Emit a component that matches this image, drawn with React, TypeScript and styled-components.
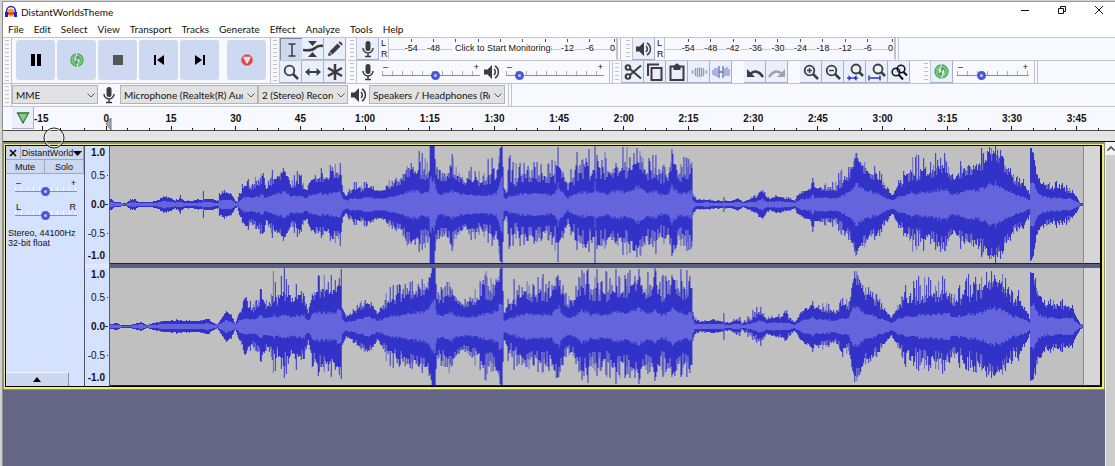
import React from "react";
import styled, { createGlobalStyle, css } from "styled-components";

const LINE = "#c3c4ca";
const BAR = "#f8f9fe";
const INK = "#3c3c3c";
const UI = `Lato, "Noto Sans", sans-serif`;
const ARIAL = `"Liberation Sans", Arial, sans-serif`;

const Global = createGlobalStyle`
  * { box-sizing: border-box; }
  body { margin: 0; background: #636684; font-family: ${UI}; color: #111; }
  button, select, input { font: inherit; color: inherit; margin: 0; }
  button { padding: 0; border: 0; background: none; }
  svg { display: block; flex: none; }
`;

/* ---------- window frame ---------- */
const Window = styled.div`
  min-height: 100vh;
  display: flex;
  flex-direction: column;
  position: relative;
  overflow: hidden;
  background: #636684;
  border-left: 2px solid #d2d2d2;
  border-top: 1px solid #d2d2d2;
`;
const Inner = styled.div`
  flex: 1;
  display: flex;
  flex-direction: column;
  border-left: 1px solid #8f8f8f;
  border-top: 1px solid #999;
`;
const TitleBar = styled.header`
  display: flex;
  align-items: center;
  height: 19px;
  background: #fff;
  padding-left: 1px;
`;
const Title = styled.h1`
  flex: 1;
  margin: 0 0 0 3px;
  font-size: 10px;
  line-height: 18px;
  font-weight: 400;
`;
const WinButtons = styled.div`
  display: flex;
  gap: 20px;
  padding: 0 8px 3px 0;
`;
const WinButton = styled.button`
  width: 17px;
  height: 16px;
  display: grid;
  place-items: center;
`;
const Menu = styled.nav`
  display: flex;
  gap: 10px;
  height: 16px;
  padding-left: 5px;
  background: #fff;
`;
const MenuItem = styled.button`
  font-size: 10px;
  line-height: 16px;
`;

/* ---------- toolbar dock ---------- */
const Dock = styled.div`
  background: ${BAR};
  border-top: 1px solid ${LINE};
`;
const DockRow = styled.div`
  display: flex;
  border-bottom: 1px solid ${LINE};
`;
const Stack = styled.div<{ $grow?: boolean }>`
  display: flex;
  flex-direction: column;
  ${(p) => (p.$grow ? "flex: 1; min-width: 0;" : "padding-right: 2px;")}
`;
const Strip = styled.div<{ $line?: boolean }>`
  display: flex;
  height: ${(p) => (p.$line ? 23 : 22)}px;
  ${(p) => p.$line && `border-bottom: 1px solid ${LINE};`}
`;
const Grabber = styled.span`
  width: 9px;
  flex: none;
  border-right: 1px solid ${LINE};
  padding: 2px;
  background: repeating-linear-gradient(#c0c1c8 0 1px, transparent 1px 4px) content-box;
`;
const EndCap = styled.span`
  width: 4px;
  flex: none;
  border-left: 1px solid ${LINE};
  border-right: 1px solid ${LINE};
`;
const Space = styled.span<{ $w: number }>`
  width: ${(p) => p.$w}px;
  flex: none;
`;
const Transport = styled.div`
  display: flex;
  gap: 2px;
  padding: 2px 4px 3px 4px;
  border-right: 1px solid ${LINE};
`;
const BigButton = styled.button<{ $apart?: boolean }>`
  width: 39px;
  height: 40px;
  border-radius: 3px;
  background: #cdd9f0;
  display: grid;
  place-items: center;
  ${(p) => p.$apart && "margin-left: 6px;"}
`;
const ToolButton = styled.button<{ $down?: boolean }>`
  width: 22px;
  height: 22px;
  flex: none;
  display: grid;
  place-items: center;
  background: #e9effc;
  border: solid;
  border-width: 0 1px 1px 0;
  border-color: #a9afbe;
  ${(p) =>
    p.$down &&
    css`
      background: #cdd9f0;
      border-width: 1px 0 0 1px;
      border-color: #7f8799;
    `}
`;
const Glyph = styled.span<{ $w: number }>`
  width: ${(p) => p.$w}px;
  flex: none;
  display: grid;
  place-items: center;
`;

/* ---------- meters ---------- */
const Channels = styled.div`
  width: 9px;
  padding-left: 2px;
  font: 9px/11px ${ARIAL};
`;
const MeterFace = styled.button<{ $w: number; $lead: number }>`
  position: relative;
  width: ${(p) => p.$w}px;
  height: 21px;
  display: grid;
  grid-template-columns: repeat(9, minmax(0, 1fr)) 14px;
  padding: 0 1px 0 ${(p) => p.$lead}px;
  border-left: 1px solid ${LINE};
  border-right: 1px solid ${LINE};
  background: linear-gradient(#c9cad0, #c9cad0) 0 11px / 100% 1px no-repeat;
  font: 9px/11px ${ARIAL};
`;
const Mark = styled.span`
  display: flex;
  flex-direction: column;
  align-items: center;
  &:nth-child(10) {
    align-items: flex-end;
  }
  &::before {
    content: "";
    width: 1px;
    height: 3px;
    margin: 1px 0 2px;
    background: #555;
  }
`;
const MarkText = styled.span`
  background: ${BAR};
  line-height: 9px;
`;
const Hint = styled.span`
  position: absolute;
  left: 63px;
  top: 5px;
  padding-left: 3px;
  background: #fff;
`;

/* ---------- sliders ---------- */
const SliderBox = styled.label<{ $w: number; $tall?: boolean }>`
  width: ${(p) => p.$w}px;
  flex: none;
  display: flex;
  flex-direction: column;
  padding-top: ${(p) => (p.$tall ? 0 : 2)}px;
`;
const Ends = styled.span`
  display: flex;
  justify-content: space-between;
  padding: 0 1px;
  height: 6px;
  font: 9px/9px ${ARIAL};
`;
const Range = styled.input<{ $soft?: boolean }>`
  appearance: none;
  width: 100%;
  height: 11px;
  background:
    linear-gradient(#8d8f96, #8d8f96) 0 6px / 100% 1px no-repeat,
    repeating-linear-gradient(90deg, ${(p) => (p.$soft ? "#f8faff 0 1px, transparent 1px 6px" : "#aaacb3 0 1px, transparent 1px 10px")}) 0 2px / 100% 4px no-repeat;
  &::-webkit-slider-thumb {
    appearance: none;
    width: 9px;
    height: 9px;
    margin-top: 1px;
    border-radius: 50%;
    border: 3px solid #4a55dc;
    background: #c3c8f5;
  }
`;

/* ---------- device toolbar ---------- */
const SelectWrap = styled.label<{ $w: number }>`
  position: relative;
  display: flex;
  width: ${(p) => p.$w}px;
  height: 19px;
  margin-top: 1px;
  svg {
    position: absolute;
    right: 3px;
    top: 8px;
    pointer-events: none;
  }
`;
const Select = styled.select`
  appearance: none;
  width: 100%;
  height: 19px;
  padding: 0 14px 0 3px;
  border: 1px solid #b3b3b3;
  border-radius: 0;
  background: #e2e2e2;
  font-size: 10px;
  text-overflow: clip;
`;

/* ---------- timeline ---------- */
const Timeline = styled.div`
  display: flex;
  height: 24px;
  padding: 0 6px 0 9px;
  background: ${BAR};
  border-bottom: 1px solid #4c4c4c;
`;
const PinButton = styled.button`
  width: 22px;
  height: 22px;
  flex: none;
  display: grid;
  place-items: center;
  background: #e9effc;
  border: solid #a9afbe;
  border-width: 0 1px 1px 0;
`;
const FirstMark = styled.div`
  width: 40px;
  flex: none;
  display: flex;
  flex-direction: column;
  justify-content: space-between;
  font: bold 10px/11px ${ARIAL};
  padding: 6px 5px 0 0;
`;
const TimeGrid = styled.div`
  flex: 1;
  display: grid;
  grid-template-columns: repeat(16, minmax(0, 1fr));
`;
const TimeCell = styled.div`
  display: flex;
  flex-direction: column;
  justify-content: space-between;
  padding-top: 6px;
  text-align: center;
  font: bold 10px/11px ${ARIAL};
`;
const Ticks = styled.div`
  display: flex;
  justify-content: space-around;
  align-items: flex-end;
`;
const Tick = styled.i<{ $major?: boolean }>`
  width: 1px;
  height: ${(p) => (p.$major ? 4 : 2)}px;
  background: #222;
`;
const QuickPlay = styled.div`
  height: 11px;
  background: #e4e4e4;
  border-bottom: 1px solid #111;
`;
const PlayMark = styled.svg`
  position: absolute;
  left: 104px;
  top: 117px;
`;
const Pointer = styled.svg`
  position: absolute;
  left: 41px;
  top: 126px;
`;

/* ---------- tracks ---------- */
const Workspace = styled.main`
  flex: 1;
  display: flex;
`;
const TrackArea = styled.div`
  flex: 1;
  min-width: 0;
`;
const Track = styled.section`
  display: flex;
  border: solid #8f8f78;
  border-width: 2px 1px 1px 0;
  background: #000;
  box-shadow: inset 1px 0 0 #8f8f78;
`;
const Glow = styled.div`
  flex: 1;
  min-width: 0;
  display: flex;
  margin-left: 1px;
  border: solid #f0ee78;
  border-width: 1px 2px 2px 1px;
`;
const Body = styled.div`
  flex: 1;
  min-width: 0;
  display: flex;
  border: solid #000;
  border-width: 1px 2px 1px 1px;
`;
const Panel = styled.div`
  width: 79px;
  flex: none;
  display: flex;
  flex-direction: column;
  background: #d4e1ff;
  border-right: 1px solid #4d5266;
  font: 9px/10px ${ARIAL};
`;
const PanelRow = styled.div`
  display: flex;
`;
const PanelButton = styled.button<{ $w?: number }>`
  ${(p) => (p.$w ? `width: ${p.$w}px;` : "flex: 1;")}
  height: 14px;
  display: flex;
  align-items: center;
  justify-content: center;
  background: #ccd8f0;
  border: solid #a2a8b8;
  border-width: 0 1px 1px 0;
  white-space: nowrap;
`;
const PanelSliders = styled.div`
  display: flex;
  flex-direction: column;
  gap: 7px;
  padding: 5px 6px 0 9px;
`;
const Info = styled.p`
  margin: 8px 0 0 2px;
  flex: 1;
`;
const Collapse = styled.button`
  width: 63px;
  height: 14px;
  display: grid;
  place-items: center;
  background: #ccd8f0;
  border: solid;
  border-width: 1px 1px 0 0;
  border-color: #f4f7ff #8a90a0 #8a90a0;
`;
const ChannelStack = styled.div`
  flex: 1;
  min-width: 0;
  display: flex;
  flex-direction: column;
`;
const ChannelRow = styled.div`
  display: flex;
  height: 118px;
`;
const Divider = styled.div`
  height: 4px;
  display: flex;
  background: #5c6080;
  &::before {
    content: "";
    width: 24px;
    background: #e2eaff;
  }
`;
const VRuler = styled.div`
  width: 25px;
  flex: none;
  display: grid;
  grid-template-rows: 13px 32px 26px 32px 13px;
  background: #d4e1ff;
  border-right: 1px solid #55596a;
  font: 10px/11px ${ARIAL};
`;
const VMark = styled.span<{ $bold?: boolean; $tick?: boolean }>`
  display: flex;
  align-items: center;
  justify-content: flex-end;
  padding-right: 1px;
  font-weight: ${(p) => (p.$bold ? 700 : 400)};
  &::after {
    content: "";
    width: ${(p) => (p.$bold ? 3 : 1)}px;
    height: 1px;
    margin-left: ${(p) => (p.$bold ? 0 : 2)}px;
    background: ${(p) => (p.$tick ? "#222" : "transparent")};
  }
`;
const Clip = styled.div`
  flex: 1;
  min-width: 0;
  background: #c0c0c0;
  border-bottom: 1px solid #222;
  svg {
    width: 100%;
    height: 117px;
  }
`;
const Tail = styled.div`
  width: 17px;
  flex: none;
  background: #d6d6d6;
  border-left: 1px solid #8a8a8a;
  border-bottom: 1px solid #222;
`;
const ScrollBar = styled.div`
  width: 10px;
  flex: none;
  background: #cdcdcd;
  border-left: 1px solid #eee;
`;
const ScrollButton = styled.button`
  width: 9px;
  height: 13px;
  display: grid;
  place-items: center;
  overflow: hidden;
  background: #f3f3f3;
`;

/* ---------- waveform data: [pixel column, body height, peak height] ---------- */
type Point = [number, number, number];
const LEFT: Point[] = [
  [1, 5, 5], [4, 2, 2], [16, 1, 1], [20, 4, 5], [25, 4, 5], [28, 2, 2], [41, 2, 2], [49, 4, 5], [53, 7, 9], [61, 5, 6],
  [65, 3, 4], [70, 5, 9], [74, 3, 3], [86, 3, 5], [92, 4, 5], [93, 13, 13], [94, 5, 6], [98, 5, 6], [106, 3, 4],
  [108, 3, 3], [109, 9, 12], [113, 10, 14], [121, 9, 11], [125, 3, 3], [127, 2, 3], [129, 7, 12], [134, 17, 26],
  [141, 16, 24], [149, 20, 30], [152, 24, 44], [156, 15, 17], [163, 22, 40], [167, 25, 36], [175, 30, 36], [181, 17, 24],
  [188, 20, 34], [197, 13, 15], [200, 22, 32], [209, 25, 35], [219, 24, 36], [224, 29, 44], [230, 28, 40], [233, 12, 12],
  [236, 8, 9], [243, 14, 24], [249, 13, 20], [258, 16, 22], [266, 12, 16], [276, 14, 18], [281, 18, 27], [288, 20, 25],
  [293, 24, 34], [296, 30, 46], [302, 31, 50], [306, 29, 52], [316, 27, 48], [319, 30, 48], [320, 58, 58], [324, 58, 58],
  [326, 32, 40], [328, 25, 34], [336, 25, 34], [341, 32, 54], [347, 26, 34], [356, 20, 27], [361, 20, 38], [371, 20, 32],
  [378, 22, 50], [386, 24, 38], [388, 34, 44], [390, 56, 58], [392, 58, 58], [394, 16, 18], [396, 10, 12], [399, 20, 46],
  [406, 20, 44], [411, 24, 44], [424, 25, 42], [436, 23, 38], [445, 23, 48], [447, 36, 44], [448, 57, 58], [449, 36, 40],
  [454, 24, 32], [458, 14, 17], [461, 18, 34], [468, 26, 52], [471, 28, 58], [481, 26, 52], [484, 28, 50], [485, 57, 58],
  [486, 28, 50], [491, 28, 58], [498, 25, 48], [506, 32, 58], [511, 30, 58], [516, 28, 56], [523, 32, 54], [527, 42, 56],
  [531, 38, 56], [537, 26, 46], [546, 30, 56], [551, 22, 38], [559, 26, 42], [562, 42, 58], [566, 32, 54], [571, 24, 48],
  [577, 28, 58], [581, 29, 50], [582, 40, 46], [583, 10, 12], [585, 4, 8], [588, 3, 5], [596, 4, 5], [603, 3, 5],
  [613, 3, 3], [614, 7, 7], [615, 3, 4], [621, 3, 4], [629, 5, 6], [633, 2, 3], [639, 4, 6], [646, 6, 9], [653, 12, 17],
  [657, 6, 8], [661, 5, 6], [666, 7, 9], [676, 5, 8], [685, 3, 4], [688, 7, 12], [694, 12, 15], [701, 14, 16],
  [703, 26, 28], [705, 15, 17], [716, 14, 22], [726, 14, 26], [733, 20, 36], [739, 26, 36], [743, 36, 45], [746, 50, 57],
  [751, 37, 45], [761, 29, 38], [769, 23, 36], [776, 15, 20], [781, 10, 12], [783, 8, 9], [788, 17, 21], [794, 20, 34],
  [802, 27, 54], [809, 25, 46], [813, 30, 48], [819, 26, 38], [829, 34, 56], [836, 34, 50], [844, 23, 27], [851, 28, 46],
  [857, 32, 52], [866, 32, 52], [876, 41, 56], [881, 48, 57], [887, 48, 58], [895, 36, 48], [901, 29, 38], [905, 22, 28],
  [913, 18, 26], [919, 11, 18], [920, 9, 10], [921, 54, 56], [924, 50, 55], [927, 30, 35], [931, 20, 24], [941, 15, 22],
  [951, 14, 24], [961, 12, 19], [968, 5, 6], [971, 1, 1], [975, 0, 0],
];
const RIGHT: Point[] = [
  [1, 2, 2], [6, 3, 3], [11, 1, 1], [20, 1, 1], [31, 4, 4], [36, 1, 1], [46, 3, 4], [56, 5, 6], [71, 5, 7], [81, 5, 6],
  [91, 5, 6], [97, 7, 9], [103, 3, 3], [107, 1, 1], [113, 10, 11], [116, 14, 16], [121, 10, 12], [125, 2, 2], [129, 13, 15],
  [134, 17, 29], [143, 15, 24], [151, 25, 44], [157, 18, 22], [163, 25, 54], [167, 22, 36], [173, 28, 58], [177, 28, 58],
  [181, 20, 32], [187, 25, 46], [194, 26, 40], [198, 12, 14], [202, 28, 56], [211, 32, 50], [219, 32, 48], [224, 30, 52],
  [229, 38, 58], [231, 40, 58], [232, 18, 20], [236, 9, 10], [241, 11, 14], [251, 18, 26], [257, 22, 30], [263, 19, 22],
  [267, 12, 14], [270, 14, 18], [276, 20, 36], [286, 25, 42], [301, 30, 44], [316, 35, 47], [320, 46, 52], [322, 58, 58],
  [325, 58, 58], [327, 26, 34], [336, 26, 44], [340, 34, 56], [346, 26, 32], [354, 20, 26], [361, 22, 38], [371, 26, 46],
  [375, 30, 58], [381, 28, 48], [388, 40, 58], [390, 57, 58], [392, 58, 58], [394, 12, 14], [398, 16, 48], [406, 22, 46],
  [411, 24, 42], [417, 30, 50], [424, 25, 42], [432, 28, 52], [441, 26, 46], [447, 44, 58], [449, 44, 56], [453, 25, 42],
  [458, 20, 28], [466, 24, 46], [471, 36, 58], [476, 34, 58], [481, 28, 58], [488, 28, 58], [496, 26, 54], [503, 32, 58],
  [509, 32, 58], [516, 30, 58], [523, 36, 58], [529, 42, 58], [536, 30, 56], [546, 36, 58], [551, 26, 50], [559, 30, 56],
  [562, 44, 58], [566, 36, 58], [574, 28, 58], [582, 36, 57], [583, 14, 15], [585, 6, 8], [591, 4, 5], [603, 5, 7],
  [613, 4, 5], [614, 13, 13], [615, 3, 4], [621, 3, 4], [629, 6, 12], [632, 2, 3], [640, 5, 13], [651, 13, 22], [657, 6, 8],
  [666, 8, 12], [679, 7, 16], [685, 3, 4], [691, 12, 14], [701, 17, 22], [703, 24, 27], [705, 15, 18], [716, 15, 24],
  [726, 13, 20], [733, 19, 36], [739, 18, 28], [744, 46, 54], [749, 46, 54], [754, 30, 42], [761, 28, 38], [768, 20, 30],
  [776, 14, 17], [782, 8, 9], [788, 17, 23], [794, 22, 42], [803, 23, 44], [811, 25, 50], [819, 27, 52], [828, 26, 42],
  [836, 32, 56], [843, 23, 29], [847, 21, 34], [856, 27, 52], [866, 27, 52], [876, 34, 56], [882, 43, 58], [889, 43, 58],
  [896, 34, 48], [903, 23, 35], [911, 21, 34], [919, 10, 12], [920, 6, 7], [921, 54, 55], [924, 50, 54], [929, 28, 38],
  [936, 20, 27], [946, 19, 28], [956, 18, 25], [963, 18, 22], [966, 10, 11], [971, 2, 2], [975, 0, 0],
];

const WIDTH = 974;
const MID = 58;

const noise = (n: number) => {
  const v = Math.sin(n * 127.1 + 311.7) * 43758.5453;
  return v - Math.floor(v);
};

function envelope(points: Point[], x: number): [number, number] {
  let i = 0;
  while (i < points.length - 2 && points[i + 1][0] <= x) i++;
  const [ax, ab, ap] = points[i];
  const [bx, bb, bp] = points[i + 1];
  const t = Math.min(1, Math.max(0, (x - ax) / (bx - ax)));
  return [ab + (bb - ab) * t, ap + (bp - ap) * t];
}

function buildPaths(points: Point[], seed: number) {
  let body = "";
  let pale = "";
  let rms = "";
  const column = (x: number, up: number, down: number) => `M${x} ${MID - up}h1V${MID + 1 + down}h-1z`;
  for (let x = 0; x < WIDTH; x++) {
    const [base, peak] = envelope(points, x);
    const reach = (k: number) => {
      const r = noise(x * 3 + seed + k);
      const spike = r > 0.6 ? 0.4 + (r - 0.6) * 1.8 : r * 0.6;
      return Math.max(0, Math.min(58, Math.round(base + (peak - base) * spike)));
    };
    const up = reach(0);
    const down = Math.round((reach(0) * 2 + reach(5000)) / 3);
    const light = noise(x * 7 + seed + 90);
    if (light > 0.74 && peak - base > 5) {
      pale += column(x, up, down);
      body += column(x, Math.round(base * 0.9), Math.round(base * 0.9));
    } else {
      body += column(x, up, down);
    }
    const inner = Math.round(base * (0.36 + noise(x + seed) * 0.12));
    rms += column(x, inner, inner);
  }
  return { body, pale, rms };
}

function Waveform({ points, seed }: { points: Point[]; seed: number }) {
  const { body, pale, rms } = React.useMemo(() => buildPaths(points, seed), [points, seed]);
  return (
    <svg viewBox={`0 0 ${WIDTH} 117`} preserveAspectRatio="none" aria-hidden="true">
      <path d={pale} fill="#6c6cc8" />
      <path d={body} fill="#3232c8" />
      <path d={rms} fill="#6464dc" />
    </svg>
  );
}

/* ---------- icons ---------- */
const Svg = ({ s = 18, h, children }: { s?: number; h?: number; children: React.ReactNode }) => (
  <svg width={s} height={h ?? s} viewBox={`0 0 ${s} ${h ?? s}`} fill="none" stroke={INK} strokeWidth="2" aria-hidden="true">
    {children}
  </svg>
);
const Logo = () => (
  <Svg s={14} h={13}>
    <path d="M3.5 7a3.5 3.5 0 0 1 7 0l-1.500 4.500h-4z" fill="#f6a020" stroke="none" />
    <path d="M3.500 7.500h7v2h-7z" fill="#e2311d" stroke="none" />
    <path d="M2.500 8V6.500a4.500 5 0 0 1 9 0V8" stroke="#1b22c9" strokeWidth="1.500" />
    <path d="M2.500 7v5M11.500 7v5" stroke="#1b22c9" strokeWidth="3" />
  </Svg>
);
const Loop = ({ s = 14 }: { s?: number }) => (
  <svg width={s} height={s} viewBox="0 0 14 14" fill="none" aria-hidden="true">
    <circle cx="7" cy="7" r="4.700" stroke="#43a04c" strokeWidth="4" />
    <circle cx="7" cy="7" r="4.700" stroke="#7ccb80" strokeWidth="2" />
    <path d="M6 3l3.500 1.500L7 7.500zM8 11l-3.500-1.500L7 6.500z" fill="#43a04c" />
    <path d="M6.500 0v3.500L4 5.500M7.500 14v-3.500L10 8.500" stroke="#dbe6f5" strokeWidth="1" />
  </svg>
);
const Mic = () => (
  <Svg s={14} h={18}>
    <rect x="4.500" y="1" width="5" height="10" rx="2.500" fill={INK} stroke="none" />
    <path d="M2 8a5 5 0 0 0 10 0M7 13v3M4 16.500h6" strokeWidth="1.500" />
  </Svg>
);
const Speaker = () => (
  <Svg s={16} h={16}>
    <path d="M0 5.500h3.500L8 1v14l-4.500-4.500H0z" fill={INK} stroke="none" />
    <path d="M10 5a4 4 0 0 1 0 6M11 2a7 7 0 0 1 0 12" strokeWidth="1.500" />
  </Svg>
);
const Lens = ({ children }: { children?: React.ReactNode }) => (
  <Svg>
    <circle cx="7.500" cy="7.500" r="4.800" strokeWidth="1.800" />
    <path d="M11 11l5 5" strokeWidth="2.500" />
    {children}
  </Svg>
);
const Chevron = () => (
  <svg width="8" height="5" viewBox="0 0 8 5" fill="none" stroke="#555" aria-hidden="true">
    <path d="M.5.500L4 4 7.500.500" />
  </svg>
);

function Slider(props: { label: string; w: number; value: number; ends?: [string, string]; soft?: boolean }) {
  const [a, b] = props.ends ?? ["–", "+"];
  return (
    <SliderBox $w={props.w} $tall={props.soft}>
      <Ends>
        <span>{a}</span>
        <span>{b}</span>
      </Ends>
      <Range type="range" aria-label={props.label} defaultValue={props.value} $soft={props.soft} />
    </SliderBox>
  );
}

function Picker({ label, w, value }: { label: string; w: number; value: string }) {
  return (
    <SelectWrap $w={w}>
      <Select aria-label={label} defaultValue={value}>
        <option>{value}</option>
      </Select>
      <Chevron />
    </SelectWrap>
  );
}

const DB = ["-54", "-48", "-42", "-36", "-30", "-24", "-18", "-12", "-6", "0"];
const COVERED = ["-42", "-36", "-30", "-24"];
function Meter({ w, lead, hint, label }: { w: number; lead: number; hint?: string; label: string }) {
  return (
    <>
      <Channels>
        L<br />R
      </Channels>
      <MeterFace $w={w} $lead={lead} aria-label={label}>
        {DB.map((d) => (
          <Mark key={d}>{!(hint && COVERED.includes(d)) && <MarkText>{d}</MarkText>}</Mark>
        ))}
        {hint && <Hint>{hint}</Hint>}
      </MeterFace>
      <EndCap />
    </>
  );
}

const MENUS = ["File", "Edit", "Select", "View", "Transport", "Tracks", "Generate", "Effect", "Analyze", "Tools", "Help"];
const TIMES = ["0", "15", "30", "45", "1:00", "1:15", "1:30", "1:45", "2:00", "2:15", "2:30", "2:45", "3:00", "3:15", "3:30", "3:45"];

function Channel({ points, seed }: { points: Point[]; seed: number }) {
  return (
    <ChannelRow>
      <VRuler>
        <VMark $bold>1.0</VMark>
        <VMark $tick>0.5</VMark>
        <VMark $bold $tick>0.0</VMark>
        <VMark $tick>-0.5</VMark>
        <VMark $bold>-1.0</VMark>
      </VRuler>
      <Clip>
        <Waveform points={points} seed={seed} />
      </Clip>
      <Tail />
    </ChannelRow>
  );
}

export default function App() {
  return (
    <Window>
      <Global />
      <Inner>
        <TitleBar>
          <Logo />
          <Title>DistantWorldsTheme</Title>
          <WinButtons>
            <WinButton aria-label="Minimize">
              <Svg s={10}><path d="M1 5.500h8" stroke="#111" strokeWidth="1" /></Svg>
            </WinButton>
            <WinButton aria-label="Restore">
              <Svg s={10}><path d="M1.500 3.500h5v5h-5zM3.500 3V1.500h5v5H7" stroke="#111" strokeWidth="1" /></Svg>
            </WinButton>
            <WinButton aria-label="Close">
              <Svg s={10}><path d="M1 1l8 8M9 1l-8 8" stroke="#111" strokeWidth="1" /></Svg>
            </WinButton>
          </WinButtons>
        </TitleBar>
        <Menu>
          {MENUS.map((m) => (
            <MenuItem key={m}>{m}</MenuItem>
          ))}
        </Menu>

        <Dock>
          <DockRow>
            <Grabber />
            <Transport>
              <BigButton aria-label="Pause">
                <Svg s={12}><path d="M1 0h4v12H1zM7 0h4v12H7z" fill="#000" stroke="none" /></Svg>
              </BigButton>
              <BigButton aria-label="Play loop"><Loop /></BigButton>
              <BigButton aria-label="Stop">
                <Svg s={10}><path d="M0 0h10v10H0z" fill="#555" stroke="none" /></Svg>
              </BigButton>
              <BigButton aria-label="Skip to start">
                <Svg s={12}><path d="M1 1h2v10H1zM11 1v10L4 6z" fill="#000" stroke="none" /></Svg>
              </BigButton>
              <BigButton aria-label="Skip to end">
                <Svg s={12}><path d="M9 1h2v10H9zM1 1v10l7-5z" fill="#000" stroke="none" /></Svg>
              </BigButton>
              <BigButton aria-label="Record" $apart>
                <Svg s={12}>
                  <circle cx="6" cy="6" r="5.800" fill="#e04848" stroke="none" />
                  <path d="M3 3.500h6L6 9z" fill="#e6e2f0" stroke="#e6e2f0" strokeWidth="1.500" strokeLinejoin="round" />
                </Svg>
              </BigButton>
            </Transport>

            <Grabber />
            <Stack>
              <Strip $line>
                <ToolButton $down aria-label="Selection tool">
                  <Svg s={16}><path d="M4.500 2h2.500l1 .7 1-.7h2.500M4.500 14h2.500l1-.7 1 .7h2.500M8 2.500v11" strokeWidth="1.500" /></Svg>
                </ToolButton>
                <ToolButton aria-label="Envelope tool">
                  <Svg s={20}>
                    <path d="M0 11q9 1 12-2t8-2" strokeWidth="2.500" />
                    <path d="M5 2h9L9.500 7zM5 18h9l-4.500-5z" fill={INK} stroke="none" />
                  </Svg>
                </ToolButton>
                <ToolButton aria-label="Draw tool">
                  <Svg s={16}><path d="M1 15l1-4 3 3zM2.500 10.500l8-8 3 3-8 8zM11.500 1.500l1-1q1 0 2 1t1 2l-1 1z" fill={INK} stroke="none" /></Svg>
                </ToolButton>
              </Strip>
              <Strip>
                <ToolButton aria-label="Zoom tool"><Lens /></ToolButton>
                <ToolButton aria-label="Time shift tool">
                  <Svg><path d="M3 9h12" /><path d="M5.500 5L1 9l4.500 4zM12.500 5L17 9l-4.500 4z" fill={INK} stroke="none" /></Svg>
                </ToolButton>
                <ToolButton aria-label="Multi tool">
                  <Svg><path d="M9 1v16M2 5l14 8M2 13l14-8" strokeWidth="2.500" /></Svg>
                </ToolButton>
              </Strip>
            </Stack>

            <Stack $grow>
              <Strip $line>
                <Grabber />
                <ToolButton aria-label="Record meter"><Mic /></ToolButton>
                <Meter w={229} lead={11} hint="Click to Start Monitoring" label="Recording level" />
                <Space $w={3} />
                <Grabber />
                <ToolButton aria-label="Playback meter"><Speaker /></ToolButton>
                <Meter w={231} lead={12} label="Playback level" />
              </Strip>
              <Strip>
                <Grabber />
                <Glyph $w={22}><Mic /></Glyph>
                <Space $w={3} />
                <Slider label="Recording volume" w={98} value={55} />
                <Space $w={3} />
                <Glyph $w={18}><Speaker /></Glyph>
                <Space $w={5} />
                <Slider label="Playback volume" w={98} value={10} />
                <Space $w={5} />
                <EndCap />
                <Grabber />
                <ToolButton aria-label="Cut">
                  <Svg>
                    <circle cx="4" cy="4.500" r="2.300" />
                    <circle cx="4" cy="13.500" r="2.300" />
                    <path d="M6 6l11 9.500M6 12L17 2.500" />
                  </Svg>
                </ToolButton>
                <ToolButton aria-label="Copy">
                  <Svg><path d="M2 13V1.500h11M5.500 5h10v12h-10z" /></Svg>
                </ToolButton>
                <ToolButton aria-label="Paste">
                  <Svg><path d="M2.500 3.500h13V17h-13z" /><path d="M5.500 2.500H7a2 2 0 0 1 4 0h1.500V7h-7z" fill={INK} stroke="none" /></Svg>
                </ToolButton>
                <ToolButton aria-label="Trim">
                  <Svg>
                    <path d="M5.500 5v8M7.500 5v9M9.500 4v10M11.500 5v9M13.500 5v8" stroke="#9a9da6" strokeWidth="1.300" />
                    <path d="M1 9h3M15 9h3M3 7v4M16 7v4" stroke="#aab2e0" strokeWidth="1.300" />
                  </Svg>
                </ToolButton>
                <ToolButton aria-label="Silence">
                  <Svg>
                    <path d="M1 7v5M3 5v8M5 5v9M13 5v8M15 4v9M17 6v7" stroke="#8e96e4" strokeWidth="1.400" />
                    <path d="M7 3v12M11 3v12M7 9h4" stroke="#6a6f8a" strokeWidth="1.300" />
                  </Svg>
                </ToolButton>
                <Space $w={12} />
                <ToolButton aria-label="Undo">
                  <Svg><path d="M4 11q7-6 13 3" strokeWidth="2.500" /><path d="M1 6v8h8z" fill={INK} stroke="none" /></Svg>
                </ToolButton>
                <ToolButton aria-label="Redo">
                  <Svg><path d="M14 11Q7 5 1 14" stroke="#a0a2a8" strokeWidth="2.500" /><path d="M17 6v8H9z" fill="#a0a2a8" stroke="none" /></Svg>
                </ToolButton>
                <Space $w={12} />
                <ToolButton aria-label="Zoom in"><Lens><path d="M5 7.500h5M7.500 5v5" strokeWidth="1.400" /></Lens></ToolButton>
                <ToolButton aria-label="Zoom out"><Lens><path d="M5 7.500h5" strokeWidth="1.400" /></Lens></ToolButton>
                <ToolButton aria-label="Fit selection">
                  <Svg>
                    <circle cx="10" cy="6" r="4.500" strokeWidth="1.800" /><path d="M13 9l4 4" strokeWidth="2.500" />
                    <path d="M1 15h11" stroke="#2a32cc" strokeWidth="1.300" />
                    <path d="M2.500 12l3 3-3 3zM10.500 12l-3 3 3 3z" fill="#2a32cc" stroke="none" />
                  </Svg>
                </ToolButton>
                <ToolButton aria-label="Fit project">
                  <Svg>
                    <circle cx="10" cy="6" r="4.500" strokeWidth="1.800" /><path d="M13 9l4 4" strokeWidth="2.500" />
                    <path d="M1 12.500v5M12 12.500v5M2 15h10" stroke="#2a32cc" strokeWidth="1.500" />
                  </Svg>
                </ToolButton>
                <ToolButton aria-label="Toggle zoom">
                  <Svg>
                    <circle cx="11" cy="6" r="3.800" stroke="#111" strokeWidth="1.500" />
                    <circle cx="6" cy="9" r="3.800" stroke="#111" strokeWidth="1.500" />
                    <path d="M13 8.500l4 4M8.500 11.500l4.500 5" stroke="#111" strokeWidth="2" />
                  </Svg>
                </ToolButton>
                <Space $w={12} />
                <Grabber />
                <ToolButton aria-label="Play at speed"><Loop s={15} /></ToolButton>
                <Space $w={4} />
                <Slider label="Playback speed" w={72} value={31} />
                <Space $w={5} />
                <EndCap />
              </Strip>
            </Stack>
          </DockRow>

          <DockRow>
            <Grabber />
            <Strip>
              <Picker label="Audio host" w={86} value="MME" />
              <Glyph $w={22}><Mic /></Glyph>
              <Picker label="Recording device" w={138} value="Microphone (Realtek(R) Audio)" />
              <Picker label="Recording channels" w={90} value="2 (Stereo) Recording Channels" />
              <Glyph $w={21}><Speaker /></Glyph>
              <Picker label="Playback device" w={136} value="Speakers / Headphones (Realtek(R) Audio)" />
              <Space $w={3} />
              <EndCap />
            </Strip>
          </DockRow>
        </Dock>

        <Timeline>
          <PinButton aria-label="Pinned play head">
            <Svg s={14} h={14}><path d="M1.500 2h11L7 12z" fill="#7fd67f" stroke="#3d6b45" strokeWidth="1.300" /></Svg>
          </PinButton>
          <FirstMark>
            <span>-15</span>
            <Ticks><Tick $major /><Tick /></Ticks>
          </FirstMark>
          <TimeGrid>
            {TIMES.map((t) => (
              <TimeCell key={t}>
                <span>{t}</span>
                <Ticks><Tick /><Tick $major /><Tick /></Ticks>
              </TimeCell>
            ))}
          </TimeGrid>
        </Timeline>
        <QuickPlay />

        <Workspace>
          <TrackArea>
            <Track>
              <Glow>
                <Body>
                  <Panel>
                    <PanelRow>
                      <PanelButton $w={15} aria-label="Close track">
                        <Svg s={8}><path d="M1 1l6 6M7 1L1 7" stroke="#000" strokeWidth="1.500" /></Svg>
                      </PanelButton>
                      <PanelButton>
                        DistantWorld
                        <Svg s={9} h={6}><path d="M0 1h9L4.500 6z" fill="#000" stroke="none" /></Svg>
                      </PanelButton>
                    </PanelRow>
                    <PanelRow>
                      <PanelButton>Mute</PanelButton>
                      <PanelButton>Solo</PanelButton>
                    </PanelRow>
                    <PanelSliders>
                      <Slider label="Gain" w={62} value={49} soft />
                      <Slider label="Pan" w={62} value={49} ends={["L", "R"]} soft />
                    </PanelSliders>
                    <Info>
                      Stereo, 44100Hz
                      <br />
                      32-bit float
                    </Info>
                    <Collapse aria-label="Collapse track">
                      <Svg s={8} h={5}><path d="M0 5h8L4 0z" fill="#000" stroke="none" /></Svg>
                    </Collapse>
                  </Panel>
                  <ChannelStack>
                    <Channel points={LEFT} seed={11} />
                    <Divider />
                    <Channel points={RIGHT} seed={733} />
                  </ChannelStack>
                </Body>
              </Glow>
            </Track>
          </TrackArea>
          <ScrollBar>
            <ScrollButton aria-label="Scroll up">
              <Svg s={8} h={5}><path d="M.5 4.500L4 1l3.500 3.500" stroke="#444" strokeWidth="1.500" /></Svg>
            </ScrollButton>
          </ScrollBar>
        </Workspace>
      </Inner>
      <PlayMark width="6" height="12" viewBox="0 0 6 12" aria-hidden="true">
        <path d="M5 0v12L0 6z" fill="#aaa" stroke="#777" strokeWidth="1" />
      </PlayMark>
      <Pointer width="22" height="22" viewBox="0 0 22 22" fill="none" aria-hidden="true">
        <circle cx="11" cy="11" r="9" stroke="#fff" strokeWidth="1" />
        <circle cx="11" cy="11" r="10" stroke="#222" strokeWidth="1" />
      </Pointer>
    </Window>
  );
}
